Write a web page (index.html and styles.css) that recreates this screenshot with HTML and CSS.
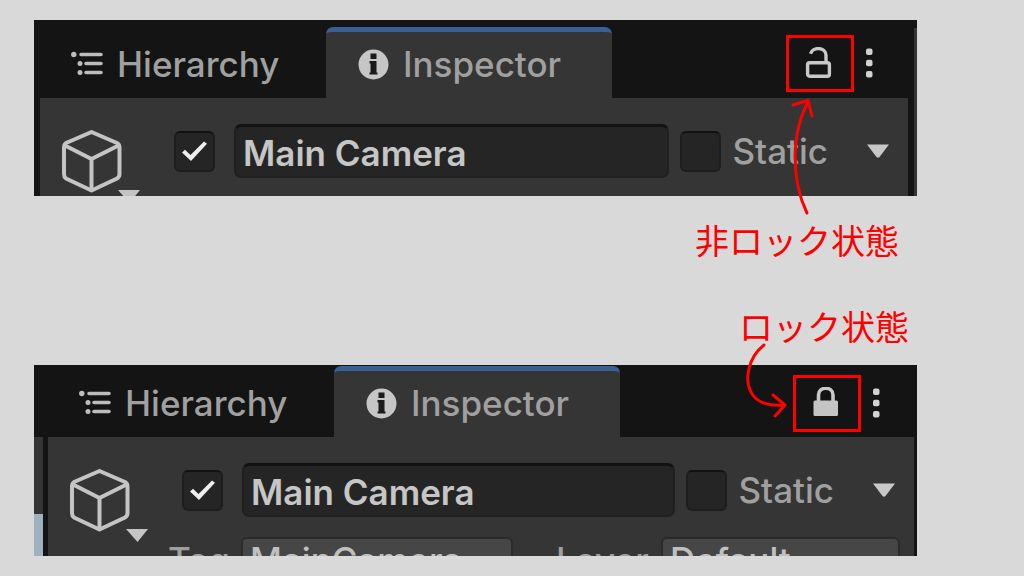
FILE: index.html
```html
<!DOCTYPE html>
<html lang="ja">
<head>
<meta charset="utf-8">
<meta name="viewport" content="width=device-width, initial-scale=1">
<title>Inspector</title>
<link rel="stylesheet" href="styles.css">
</head>
<body>
<svg class="defs" aria-hidden="true">
  <symbol id="tree" viewBox="0 0 32 26">
    <g fill="none" stroke="#bdbdbd" stroke-width="3.6" stroke-linecap="round">
      <path d="M10 3.5H30M15 12.5H30M15 21.5H30"/>
    </g>
    <g fill="#bdbdbd"><circle cx="2.8" cy="3.5" r="2.7"/><circle cx="9" cy="12.5" r="2.5"/><circle cx="9" cy="21.5" r="2.5"/></g>
  </symbol>
  <symbol id="info" viewBox="0 0 31 31">
    <circle cx="15.5" cy="15.5" r="15" fill="#c6c6c6"/>
    <path fill="#1b1b1b" d="M12.5 4.5h6v5.5h-6zM12.5 12h6v11.5h1v2h-8v-2h1V14.5h-1V12z"/>
  </symbol>
  <symbol id="cube" viewBox="0 0 78 76">
    <g fill="none" stroke="#c4c4c4" stroke-width="4" stroke-linejoin="round">
      <path d="M29.5 2L55 13Q57.5 14.5 57.5 17.5V44Q57.5 47 55 48.5L29.5 60.5L4 48.5Q2 47 2 44V17.5Q2 14.5 4 13Z"/>
      <path d="M3 15.5L29.5 29L56.5 15.5M29.5 29V60"/>
    </g>
    <path fill="#c4c4c4" d="M56 60H78L67.5 73Z"/>
  </symbol>
  <symbol id="unlocked" viewBox="0 0 32 34">
    <g fill="none" stroke="#c8c8c8" stroke-width="3.4">
      <rect x="3.6" y="15.8" width="21.8" height="13.4" rx="2"/>
      <path d="M6.5 6.8C8.5 -.4 22 -.4 22 8.5V15.5"/>
    </g>
  </symbol>
  <symbol id="locked" viewBox="0 0 32 34">
    <path fill="none" stroke="#c8c8c8" stroke-width="3.6" d="M7.5 15V8C7.5 -1 22 -1 22 8V15"/>
    <rect x="2.5" y="13.5" width="24.5" height="15.5" rx="1.5" fill="#c4c4c4"/>
  </symbol>
  <symbol id="dots" viewBox="0 0 10 32">
    <g fill="#d2d2d2"><rect x="2" y=".5" width="6.5" height="6.5" rx="2"/><rect x="2" y="11.8" width="6.5" height="6.5" rx="2"/><rect x="2" y="23" width="6.5" height="6.5" rx="2"/></g>
  </symbol>
  <symbol id="down" viewBox="0 0 22 14"><path fill="#c8c8c8" d="M0 .5H22L12.5 13Q11 14.5 9.5 13Z"/></symbol>
</svg>

<main class="page">
  <figure class="example">
    <div class="window window-unlocked">
      <div class="tabs">
        <button class="tab" type="button"><svg class="icon-tree"><use href="#tree"/></svg>Hierarchy</button>
        <button class="tab active" type="button"><svg class="icon-info"><use href="#info"/></svg>Inspector</button>
        <div class="tools">
          <button class="lock" type="button" aria-label="Lock"><svg><use href="#unlocked"/></svg></button>
          <button class="more" type="button" aria-label="More"><svg><use href="#dots"/></svg></button>
        </div>
      </div>
      <div class="dock">
        <div class="side"></div>
        <div class="inspector">
          <svg class="icon-cube"><use href="#cube"/></svg>
          <div class="row">
            <input class="check" type="checkbox" checked aria-label="Active">
            <input class="name" type="text" value="Main Camera" aria-label="Name">
            <input class="check" type="checkbox" id="static-a">
            <label class="static" for="static-a">Static</label>
            <button class="expand" type="button" aria-label="Static options"><svg><use href="#down"/></svg></button>
          </div>
        </div>
      </div>
    </div>
    <figcaption class="caption caption-below">非ロック状態</figcaption>
    <svg class="arrow" viewBox="717 20 200 250" aria-hidden="true">
      <path d="M807 213C791 180 791 134 808 102M793 105L808 100.5L812 116"/>
    </svg>
  </figure>

  <figure class="example">
    <figcaption class="caption caption-above">ロック状態</figcaption>
    <div class="window window-locked">
      <div class="tabs">
        <button class="tab" type="button"><svg class="icon-tree"><use href="#tree"/></svg>Hierarchy</button>
        <button class="tab active" type="button"><svg class="icon-info"><use href="#info"/></svg>Inspector</button>
        <div class="tools">
          <button class="lock" type="button" aria-label="Unlock"><svg><use href="#locked"/></svg></button>
          <button class="more" type="button" aria-label="More"><svg><use href="#dots"/></svg></button>
        </div>
      </div>
      <div class="dock">
        <div class="side"><div class="side-panel"></div></div>
        <div class="inspector">
          <svg class="icon-cube"><use href="#cube"/></svg>
          <div class="row">
            <input class="check" type="checkbox" checked aria-label="Active">
            <input class="name" type="text" value="Main Camera" aria-label="Name">
            <input class="check" type="checkbox" id="static-b">
            <label class="static" for="static-b">Static</label>
            <button class="expand" type="button" aria-label="Static options"><svg><use href="#down"/></svg></button>
          </div>
          <div class="row-tags">
            <label for="tag">Tag</label>
            <select id="tag"><option>MainCamera</option></select>
            <label class="layer" for="layer">Layer</label>
            <select id="layer"><option>Default</option></select>
          </div>
        </div>
      </div>
    </div>
    <svg class="arrow" viewBox="717 303 200 250" aria-hidden="true">
      <path d="M764 347C746 361 746 384 750 392C755 405 770 408 784 407M773 397L785 407L775 418"/>
    </svg>
  </figure>
</main>
</body>
</html>
```
FILE: styles.css
```css
* { box-sizing: border-box; }

body {
  margin: 0;
  background: #d9d9d9;
  font-family: Inter, "Noto Sans CJK JP", sans-serif;
  font-size: 35px;
  font-weight: 500;
  line-height: 42px;
  color: #a0a0a0;
}

button, input, select {
  margin: 0;
  padding: 0;
  border: 0;
  background: none;
  color: inherit;
  font: inherit;
}

svg { display: block; flex: none; }
.defs { position: absolute; width: 0; height: 0; }

.page {
  display: flex;
  flex-direction: column;
  gap: 35px;
  padding: 20px 107px 20px 34px;
}

.example { position: relative; margin: 0; }

.caption {
  font-family: "Noto Sans CJK JP", sans-serif;
  font-size: 34px;
  font-weight: 400;
  line-height: 50px;
  text-align: right;
  color: #ff0000;
}
.caption-below { padding: 19px 18px 1px 0; }
.caption-above { padding: 0 8px 14px 0; }

.arrow {
  position: absolute;
  top: 0;
  right: 0;
  width: 200px;
  height: 250px;
  pointer-events: none;
  fill: none;
  stroke: #ff0000;
  stroke-width: 3;
  stroke-linecap: round;
  stroke-linejoin: round;
}

/* Editor window, cropped at its lower edge */
.window { overflow: hidden; background: #141414; }
.window-unlocked {
  --left: 6px;
  --right: 9px;
  height: 176px;
  padding-top: 7px;
  background: linear-gradient(#353535, #353535) right 8px / 3px 100% no-repeat #141414;
}
.window-locked {
  --left: 14px;
  --right: 3px;
  height: 191px;
  padding-top: 1px;
}

.tabs {
  display: flex;
  height: 71px;
  padding: 0 var(--right) 0 var(--left);
}
.tab {
  display: flex;
  align-items: center;
  gap: 14px;
  width: 286px;
  padding: 0 0 2px 31px;
  border-top: 5px solid transparent;
  border-radius: 7px 7px 0 0;
}
.tab.active { background: #353535; border-top-color: #3a5f95; padding-left: 32px; }
.icon-tree { width: 32px; height: 26px; }
.icon-info { width: 31px; height: 31px; }

.tools {
  display: flex;
  align-items: center;
  margin-left: auto;
  padding: 2px 24px 0 0;
}
.window-locked .tools { padding: 4px 23px 0 0; }
.lock {
  display: grid;
  place-items: center;
  width: 68px;
  height: 57px;
  border: 3px solid #ff0000;
}
.lock svg { width: 32px; height: 34px; }
.more { display: grid; place-items: center; width: 30px; }
.more svg { width: 10px; height: 32px; }

.dock { display: flex; height: 120px; }
.side { flex: none; width: var(--left); padding-right: 5px; }
.side-panel {
  height: 100%;
  border-top: 77px solid #353535;
  background: #9fb0bf;
}

.inspector {
  flex: 1;
  min-width: 0;
  display: grid;
  grid-template-columns: 78px minmax(0, 1fr);
  grid-template-rows: 54px 46px;
  column-gap: 20px;
  row-gap: 20px;
  margin-right: var(--right);
  padding: 26px 14px 0 22px;
  background: #353535;
}
.icon-cube { grid-row: 1 / 3; width: 78px; height: 76px; margin-top: 6px; }

.row {
  display: flex;
  align-items: center;
  padding: 0 5px 0 14px;
}
.check {
  appearance: none;
  flex: none;
  display: grid;
  place-items: center;
  width: 41px;
  height: 41px;
  border: 2px solid #1e1e1e;
  border-top-color: #121212;
  border-radius: 6px;
  background: #252525;
}
.check:checked::before {
  content: "";
  width: 25px;
  height: 20px;
  background: #eeeeee;
  clip-path: polygon(0 58%, 12% 44%, 34% 70%, 88% 2%, 100% 14%, 36% 100%);
}
.name {
  flex: 1;
  min-width: 0;
  height: 54px;
  margin: 0 11px 0 19px;
  padding: 2px 7px 0;
  border: 2px solid #202020;
  border-top: 3px solid #121212;
  border-radius: 7px;
  background: #252525;
  color: #c6c6c6;
  font-weight: 600;
}
.static { margin-left: 12px; }
.expand { margin-left: auto; padding-left: 39px; }
.expand svg { width: 22px; height: 14px; }

.row-tags {
  display: grid;
  grid-template-columns: 73px 272fr 148px 239fr;
  align-items: center;
}
.layer { padding-left: 43px; }
.row-tags select {
  appearance: none;
  min-width: 0;
  height: 46px;
  padding: 0 7px;
  border: 2px solid #2b2b2b;
  border-radius: 6px;
  background: #464646;
  color: #c0c0c0;
}
```
